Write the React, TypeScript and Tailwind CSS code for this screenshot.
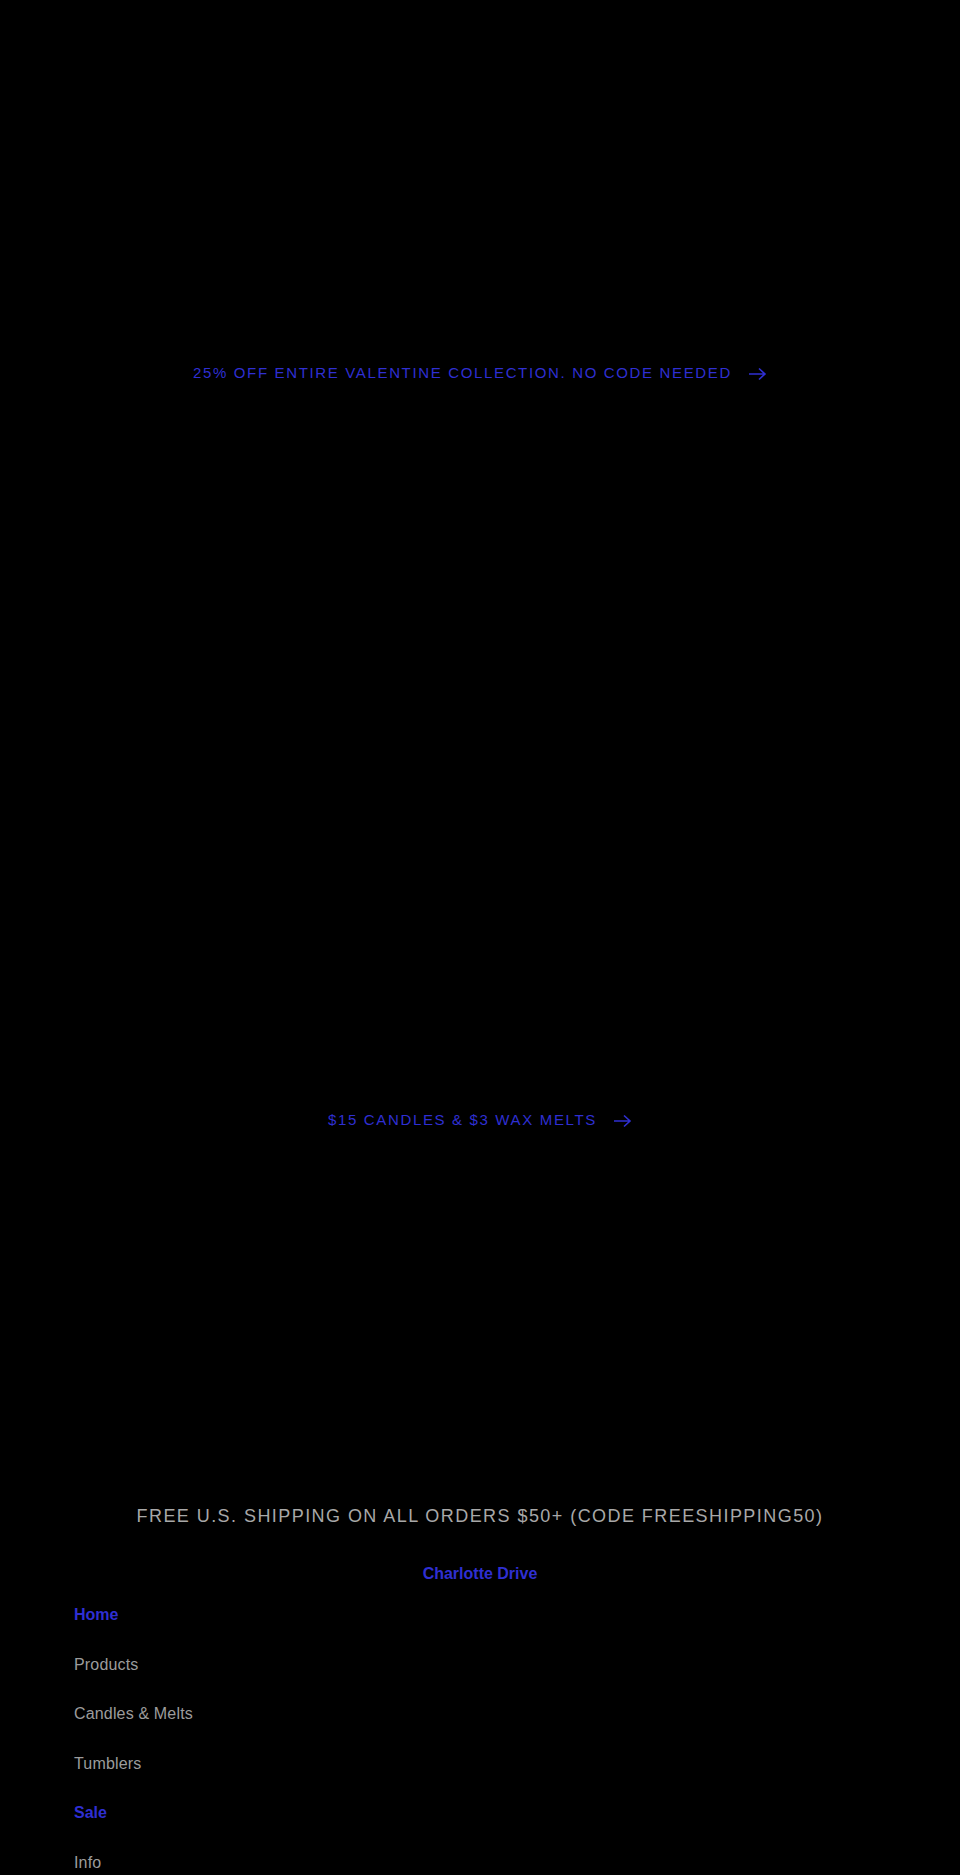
import React from "react";

const slides = [
  { text: "25% OFF ENTIRE VALENTINE COLLECTION. NO CODE NEEDED" },
  { text: "$15 CANDLES & $3 WAX MELTS" },
];

const navItems = [
  { label: "Home", active: true },
  { label: "Products", active: false },
  { label: "Candles & Melts", active: false },
  { label: "Tumblers", active: false },
  { label: "Sale", active: true },
  { label: "Info", active: false },
];

function Arrow() {
  return (
    <svg width="19" height="14" viewBox="0 0 19 14" fill="none" className="shrink-0">
      <path d="M1 7h16M11 1.5 17 7l-6 5.5" stroke="currentColor" strokeWidth="1.6" />
    </svg>
  );
}

export default function App() {
  return (
    <div className="min-h-screen bg-black font-['Liberation_Sans',Arial,sans-serif]">
      {slides.map((s) => (
        <a
          key={s.text}
          href="#"
          className="h-[747px] flex items-center justify-center gap-4 text-[#2f2fd2] text-[15px] tracking-[0.11em]"
        >
          <span>{s.text}</span>
          <Arrow />
        </a>
      ))}

      <p className="pt-[10px] text-center text-[18px] tracking-[0.08em] text-[#a8a8a8] leading-[24px]">
        FREE U.S. SHIPPING ON ALL ORDERS $50+ (CODE FREESHIPPING50)
      </p>

      <header className="pt-[36px]">
        <a href="#" className="block text-center text-[16px] font-bold text-[#2f2fd2] leading-[20px]">
          Charlotte Drive
        </a>
        <ul className="px-[74px] pt-[19px]">
          {navItems.map((n) => (
            <li key={n.label} className="h-[49.5px]">
              <a
                href="#"
                className={
                  n.active
                    ? "text-[16px] leading-[20px] text-[#2f2fd2] font-bold"
                    : "text-[16px] leading-[20px] text-[#9c9c9c] tracking-[0.01em]"
                }
              >
                {n.label}
              </a>
            </li>
          ))}
        </ul>
      </header>
    </div>
  );
}
